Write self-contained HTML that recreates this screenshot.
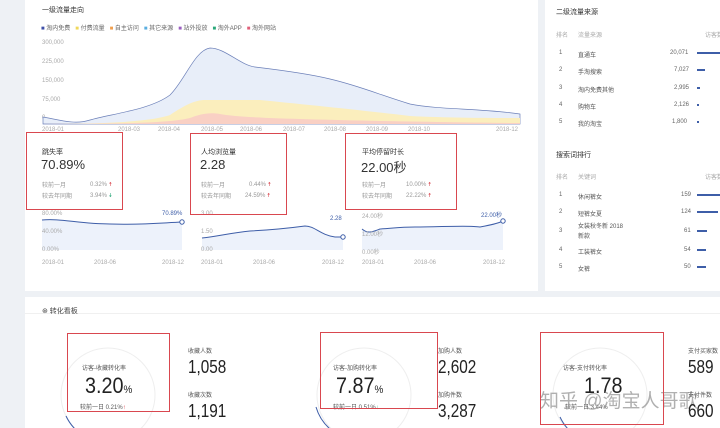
<!DOCTYPE html>
<html><head><meta charset="utf-8"><style>
*{margin:0;padding:0;box-sizing:border-box}
body{width:720px;height:428px;overflow:hidden;background:#eef1f5;font-family:"Liberation Sans","Noto Sans CJK SC",sans-serif;position:relative;color:#333}
.a{position:absolute;white-space:nowrap}
.s{font-size:6px;color:#999}
.t{font-size:7px;color:#333}
.rb{position:absolute;border:1.5px solid #d9474f}
.g{font-size:6px;color:#aaa}
.n{font-size:18px;color:#222;transform:scaleX(.85);transform-origin:0 0}
.b{font-size:22px;color:#222;transform:scaleX(.9);transform-origin:0 0}
</style></head><body>
<div class="a" style="left:25px;top:0;width:513px;height:291px;background:#fff"></div>
<div class="a" style="left:545px;top:0;width:175px;height:291px;background:#fff"></div>
<div class="a" style="left:25px;top:297px;width:695px;height:131px;background:#fff"></div>
<div class="a" style="left:25px;top:313px;width:695px;height:1px;background:#f0f0f0"></div>

<div class="a t" style="left:42px;top:5px">一级流量走向</div>
<div class="a s" style="left:41px;top:23px;color:#666">
<span style="color:#3e4fa8">■</span> 淘内免费 &nbsp; <span style="color:#f0d85a">■</span> 付费流量 &nbsp; <span style="color:#f0a050">■</span> 自主访问 &nbsp; <span style="color:#5aaee0">■</span> 其它来源 &nbsp; <span style="color:#9a5ec0">■</span> 站外投放 &nbsp; <span style="color:#2aa87a">■</span> 淘外APP &nbsp; <span style="color:#e0607a">■</span> 淘外网站</div>
<div class="a g" style="left:42px;top:40px">300,000</div>
<div class="a g" style="left:42px;top:59px">225,000</div>
<div class="a g" style="left:42px;top:78px">150,000</div>
<div class="a g" style="left:42px;top:97px">75,000</div>
<div class="a g" style="left:42px;top:115px">0</div>
<svg class="a" style="left:0;top:0" width="540" height="130">
<path d="M43 117 C60 120 75 125 90 120 C110 114 150 110 170 95 C185 80 195 50 210 48 C225 48 240 65 255 67 C280 70 310 74 330 79 C360 86 380 95 410 104 C440 110 480 108 520 114 L520 124 L43 124Z" fill="#e8eef9" stroke="#6b7fb8" stroke-width=".7"/>
<path d="M43 124 C100 124 150 122 170 115 C185 105 195 100 205 100 L260 100 C300 104 360 110 410 116 C450 118 490 118 520 118 L520 124Z" fill="#fbeebd"/>
<path d="M43 124 C120 124 170 123 190 118 C200 114 210 112 220 114 C240 118 300 119 380 121 C440 122 490 123 520 123 L520 124Z" fill="#f9d0c4"/>
</svg>
<div class="a g" style="left:42px;top:127px">2018-01</div>
<div class="a g" style="left:118px;top:127px">2018-03</div>
<div class="a g" style="left:158px;top:127px">2018-04</div>
<div class="a g" style="left:201px;top:127px">2018-05</div>
<div class="a g" style="left:240px;top:127px">2018-06</div>
<div class="a g" style="left:283px;top:127px">2018-07</div>
<div class="a g" style="left:324px;top:127px">2018-08</div>
<div class="a g" style="left:366px;top:127px">2018-09</div>
<div class="a g" style="left:408px;top:127px">2018-10</div>
<div class="a g" style="left:496px;top:127px">2018-12</div>

<div class="a t" style="left:42px;top:147px">跳失率</div>
<div class="a" style="left:41px;top:157px;font-size:13px">70.89%</div>
<div class="a s" style="left:42px;top:180px">较前一月</div><div class="a s" style="left:90px;top:180px">0.32% <span style="color:#d9474f">🠅</span></div>
<div class="a s" style="left:42px;top:191px">较去年同期</div><div class="a s" style="left:90px;top:191px">3.94% <span style="color:#2aa87a">🠇</span></div>
<div class="a t" style="left:201px;top:147px">人均浏览量</div>
<div class="a" style="left:200px;top:157px;font-size:13px">2.28</div>
<div class="a s" style="left:201px;top:180px">较前一月</div><div class="a s" style="left:249px;top:180px">0.44% <span style="color:#d9474f">🠅</span></div>
<div class="a s" style="left:201px;top:191px">较去年同期</div><div class="a s" style="left:245px;top:191px">24.59% <span style="color:#d9474f">🠅</span></div>
<div class="a t" style="left:362px;top:147px">平均停留时长</div>
<div class="a" style="left:361px;top:157px;font-size:13px">22.00秒</div>
<div class="a s" style="left:362px;top:180px">较前一月</div><div class="a s" style="left:406px;top:180px">10.00% <span style="color:#d9474f">🠅</span></div>
<div class="a s" style="left:362px;top:191px">较去年同期</div><div class="a s" style="left:406px;top:191px">22.22% <span style="color:#d9474f">🠅</span></div>

<svg class="a" style="left:0;top:210px" width="540" height="50">
<path d="M42 10 C60 8 80 14 110 14 C140 15 160 13 182 12 L182 40 L42 40Z" fill="#edf2fb"/>
<path d="M42 10 C60 8 80 14 110 14 C140 15 160 13 182 12" fill="none" stroke="#3e5ea8" stroke-width="1"/>
<circle cx="182" cy="12" r="2.2" fill="#fff" stroke="#3e5ea8"/>
<path d="M202 28 C220 26 230 23 250 21 C270 20 290 18 305 16 C315 16 320 25 335 27 L343 27 L343 40 L202 40Z" fill="#edf2fb"/>
<path d="M202 28 C220 26 230 23 250 21 C270 20 290 18 305 16 C315 16 320 25 335 27 L343 27" fill="none" stroke="#3e5ea8" stroke-width="1"/>
<circle cx="343" cy="27" r="2.2" fill="#fff" stroke="#3e5ea8"/>
<path d="M362 19 C368 24 372 22 380 19 C395 18 400 17 415 17 C440 17 470 15 480 17 C490 15 497 14 503 11 L503 40 L362 40Z" fill="#edf2fb"/>
<path d="M362 19 C368 24 372 22 380 19 C395 18 400 17 415 17 C440 17 470 15 480 17 C490 15 497 14 503 11" fill="none" stroke="#3e5ea8" stroke-width="1"/>
<circle cx="503" cy="11" r="2.2" fill="#fff" stroke="#3e5ea8"/>
</svg>
<div class="a g" style="left:42px;top:211px">80.00%</div><div class="a g" style="left:42px;top:229px">40.00%</div><div class="a g" style="left:42px;top:247px">0.00%</div>
<div class="a g" style="left:162px;top:211px;color:#3e5ea8">70.89%</div>
<div class="a g" style="left:201px;top:211px">3.00</div><div class="a g" style="left:201px;top:229px">1.50</div><div class="a g" style="left:201px;top:247px">0.00</div>
<div class="a g" style="left:330px;top:216px;color:#3e5ea8">2.28</div>
<div class="a g" style="left:362px;top:211px">24.00秒</div><div class="a g" style="left:362px;top:229px">12.00秒</div><div class="a g" style="left:362px;top:247px">0.00秒</div>
<div class="a g" style="left:481px;top:210px;color:#3e5ea8">22.00秒</div>
<div class="a g" style="left:42px;top:260px">2018-01</div><div class="a g" style="left:94px;top:260px">2018-06</div><div class="a g" style="left:162px;top:260px">2018-12</div>
<div class="a g" style="left:201px;top:260px">2018-01</div><div class="a g" style="left:253px;top:260px">2018-06</div><div class="a g" style="left:322px;top:260px">2018-12</div>
<div class="a g" style="left:362px;top:260px">2018-01</div><div class="a g" style="left:414px;top:260px">2018-06</div><div class="a g" style="left:483px;top:260px">2018-12</div>

<div class="rb" style="left:26px;top:132px;width:97px;height:78px"></div>
<div class="rb" style="left:190px;top:133px;width:97px;height:82px"></div>
<div class="rb" style="left:345px;top:133px;width:112px;height:77px"></div>

<div class="a t" style="left:556px;top:7px">二级流量来源</div>
<div class="a g" style="left:556px;top:30px">排名</div><div class="a g" style="left:578px;top:30px">流量来源</div><div class="a g" style="left:705px;top:30px">访客数</div>
<div class="a s" style="left:559px;top:50px;color:#666">1</div><div class="a s" style="left:578px;top:50px;color:#555">直通车</div><div class="a s" style="left:670px;top:50px;color:#666">20,071</div><div class="a" style="left:697px;top:52px;width:23px;height:2px;background:#3e5ea8"></div>
<div class="a s" style="left:559px;top:67px;color:#666">2</div><div class="a s" style="left:578px;top:67px;color:#555">手淘搜索</div><div class="a s" style="left:674px;top:67px;color:#666">7,027</div><div class="a" style="left:697px;top:69px;width:8px;height:2px;background:#3e5ea8"></div>
<div class="a s" style="left:559px;top:85px;color:#666">3</div><div class="a s" style="left:578px;top:85px;color:#555">淘内免费其他</div><div class="a s" style="left:674px;top:85px;color:#666">2,995</div><div class="a" style="left:697px;top:87px;width:3px;height:2px;background:#3e5ea8"></div>
<div class="a s" style="left:559px;top:102px;color:#666">4</div><div class="a s" style="left:578px;top:102px;color:#555">购物车</div><div class="a s" style="left:674px;top:102px;color:#666">2,126</div><div class="a" style="left:697px;top:104px;width:2px;height:2px;background:#3e5ea8"></div>
<div class="a s" style="left:559px;top:119px;color:#666">5</div><div class="a s" style="left:578px;top:119px;color:#555">我的淘宝</div><div class="a s" style="left:672px;top:119px;color:#666">1,800</div><div class="a" style="left:697px;top:121px;width:2px;height:2px;background:#3e5ea8"></div>
<div class="a t" style="left:556px;top:150px">搜索词排行</div>
<div class="a g" style="left:556px;top:172px">排名</div><div class="a g" style="left:578px;top:172px">关键词</div><div class="a g" style="left:705px;top:172px">访客数</div>
<div class="a s" style="left:559px;top:192px;color:#666">1</div><div class="a s" style="left:578px;top:192px;color:#555">休闲裤女</div><div class="a s" style="left:681px;top:192px;color:#666">159</div><div class="a" style="left:697px;top:194px;width:23px;height:2px;background:#3e5ea8"></div>
<div class="a s" style="left:559px;top:209px;color:#666">2</div><div class="a s" style="left:578px;top:209px;color:#555">短裤女夏</div><div class="a s" style="left:681px;top:209px;color:#666">124</div><div class="a" style="left:697px;top:211px;width:21px;height:2px;background:#3e5ea8"></div>
<div class="a s" style="left:559px;top:228px;color:#666">3</div><div class="a s" style="left:578px;top:222px;color:#555;line-height:10px">女装秋冬新 2018<br>新款</div><div class="a s" style="left:684px;top:228px;color:#666">61</div><div class="a" style="left:697px;top:230px;width:10px;height:2px;background:#3e5ea8"></div>
<div class="a s" style="left:559px;top:247px;color:#666">4</div><div class="a s" style="left:578px;top:247px;color:#555">工装裤女</div><div class="a s" style="left:684px;top:247px;color:#666">54</div><div class="a" style="left:697px;top:249px;width:9px;height:2px;background:#3e5ea8"></div>
<div class="a s" style="left:559px;top:264px;color:#666">5</div><div class="a s" style="left:578px;top:264px;color:#555">女裤</div><div class="a s" style="left:684px;top:264px;color:#666">50</div><div class="a" style="left:697px;top:266px;width:9px;height:2px;background:#3e5ea8"></div>

<div class="a t" style="left:42px;top:306px;color:#444">⊛ 转化看板</div>
<svg class="a" style="left:0;top:297px" width="720" height="131">
<circle cx="108" cy="98" r="47" fill="none" stroke="#eee"/>
<path d="M66 119 A47 47 0 0 0 75 132" fill="none" stroke="#3e5ea8" stroke-width="1"/>
<circle cx="364" cy="98" r="47" fill="none" stroke="#eee"/>
<path d="M316 110 A47 47 0 0 0 330 132" fill="none" stroke="#3e5ea8" stroke-width="1"/>
<circle cx="600" cy="98" r="47" fill="none" stroke="#eee"/>
<path d="M560 120 A47 47 0 0 0 568 132" fill="none" stroke="#3e5ea8" stroke-width="1"/>
</svg>
<div class="a s" style="left:82px;top:363px;color:#555">访客-收藏转化率</div>
<div class="a b" style="left:85px;top:373px">3.20<span style="font-size:11px">%</span></div>
<div class="a s" style="left:80px;top:402px;color:#555">较前一日 0.21%<span style="color:#d9474f">↑</span></div>
<div class="a s" style="left:188px;top:346px;color:#555">收藏人数</div>
<div class="a n" style="left:188px;top:357px">1,058</div>
<div class="a s" style="left:188px;top:390px;color:#555">收藏次数</div>
<div class="a n" style="left:188px;top:401px">1,191</div>

<div class="a s" style="left:333px;top:363px;color:#555">访客-加购转化率</div>
<div class="a b" style="left:336px;top:373px">7.87<span style="font-size:11px">%</span></div>
<div class="a s" style="left:333px;top:402px;color:#555">较前一日 0.51%<span style="color:#2aa87a">↓</span></div>
<div class="a s" style="left:438px;top:346px;color:#555">加购人数</div>
<div class="a n" style="left:438px;top:357px">2,602</div>
<div class="a s" style="left:438px;top:390px;color:#555">加购件数</div>
<div class="a n" style="left:438px;top:401px">3,287</div>

<div class="a s" style="left:563px;top:363px;color:#555">访客-支付转化率</div>
<div class="a b" style="left:584px;top:373px">1.78</div>
<div class="a s" style="left:565px;top:402px;color:#555">较前一日 3.44%</div>
<div class="a" style="left:540px;top:386px;font-size:19px;color:rgba(150,150,150,.75)">知乎 @淘宝人哥歌</div>
<div class="a s" style="left:688px;top:346px;color:#555">支付买家数</div>
<div class="a n" style="left:688px;top:357px">589</div>
<div class="a s" style="left:688px;top:390px;color:#555">支付件数</div>
<div class="a n" style="left:688px;top:401px">660</div>

<div class="rb" style="left:67px;top:333px;width:103px;height:79px"></div>
<div class="rb" style="left:320px;top:332px;width:118px;height:77px"></div>
<div class="rb" style="left:540px;top:332px;width:124px;height:93px"></div>
</body></html>
